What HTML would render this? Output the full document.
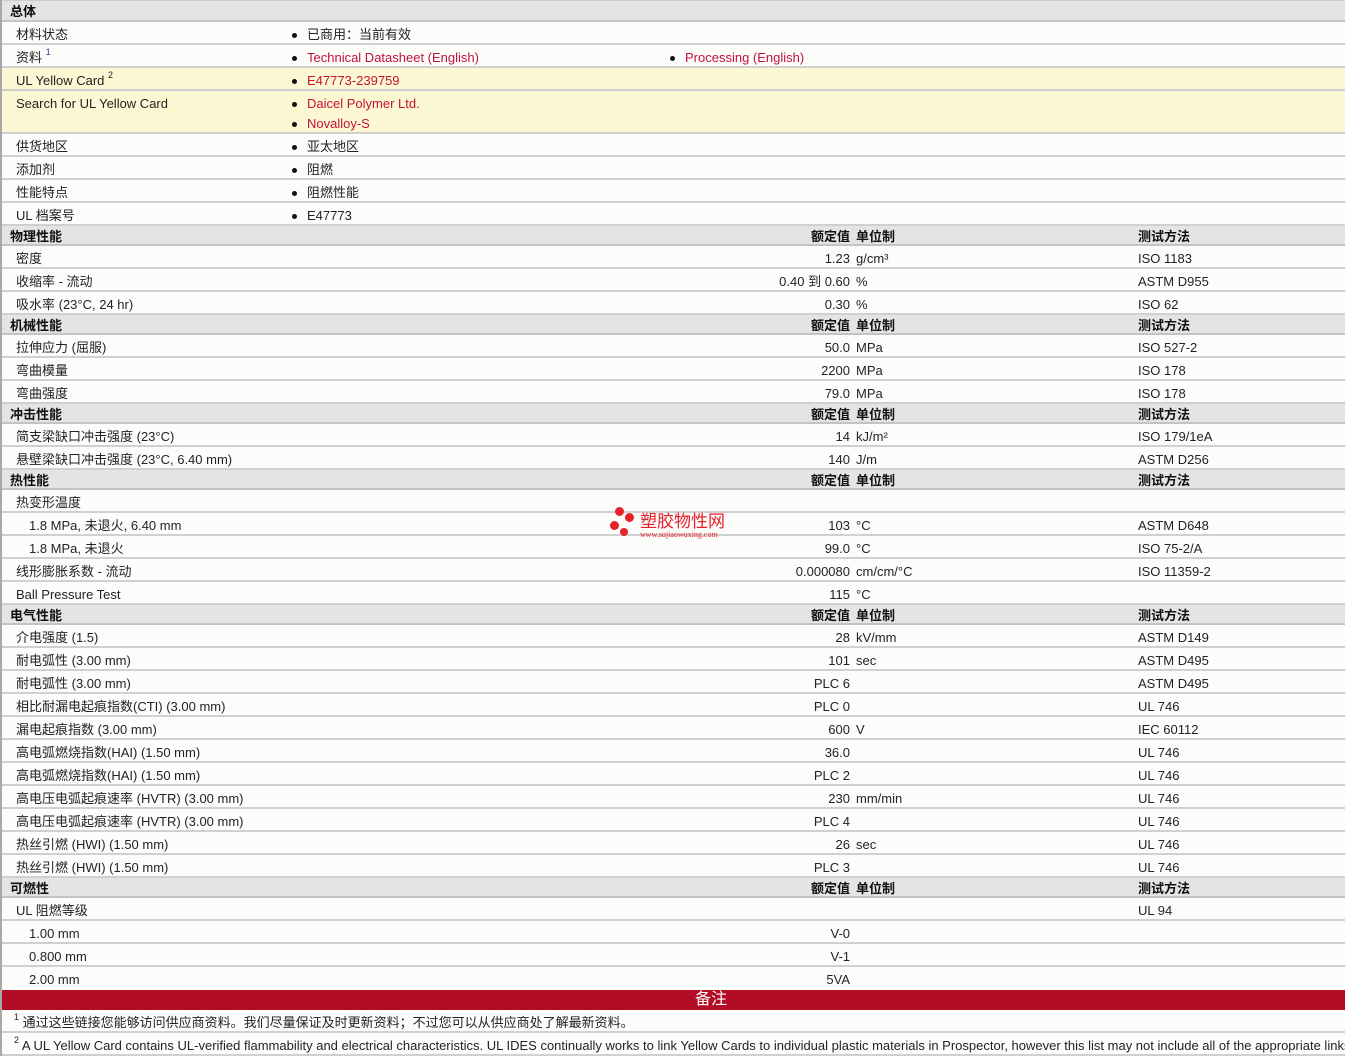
<!DOCTYPE html>
<html><head><meta charset="utf-8"><style>
*{margin:0;padding:0;box-sizing:border-box}
body{width:1345px;height:1048px;overflow:hidden;background:#fcfdfb;font-family:"Liberation Sans","Noto Sans CJK SC",sans-serif;font-size:13px;color:#222;position:relative}
#w{position:absolute;left:0;top:0;width:1345px;border-left:2px solid #a8a8a8}
.r{position:relative;height:23px;border-bottom:2px solid #d0d0d0;background:#fcfdfb}
.h{position:relative;height:20px;border-bottom:2px solid #c4c4c4;background:#e4e4e4;font-weight:bold;color:#111}
.y{background:#fdf8d4}
.r span,.h span{position:absolute;top:5px;white-space:nowrap;line-height:16px;height:16px}
.h span{top:3px}
.l{left:14px}.s{left:27px}.hl{left:8px}
.v{right:495px;text-align:right}
.u{left:854px}.m{left:1136px}
.bl::before{content:"";position:absolute;left:-15px;top:6px;width:5px;height:5px;border-radius:50%;background:#111}
.a{color:#c4103a}
sup{font-size:9px;line-height:9px;vertical-align:top;position:relative;top:-2px}
.note{height:20px;background:#b30c26;color:#fff;font-size:16px;text-align:center;line-height:20px;padding-left:75px}
</style></head><body>
<div id="w">
<div style="height:1px;background:#ccc"></div>
<div class="h" style="height:21px"><span class="hl">总体</span></div>
<div class="r"><span class="l">材料状态</span><span class="bl" style="left:305px">已商用：当前有效</span></div>
<div class="r"><span class="l">资料 <sup style="color:#551a8b">1</sup></span><span class="bl a" style="left:305px">Technical Datasheet (English)</span><span class="bl a" style="left:683px">Processing (English)</span></div>
<div class="r y"><span class="l">UL Yellow Card <sup>2</sup></span><span class="bl a" style="left:305px">E47773-239759</span></div>
<div class="r y" style="height:43px"><span class="l">Search for UL Yellow Card</span><span class="bl a" style="left:305px">Daicel Polymer Ltd.</span><span class="bl a" style="left:305px;top:25px">Novalloy-S</span></div>
<div class="r"><span class="l">供货地区</span><span class="bl" style="left:305px">亚太地区</span></div>
<div class="r"><span class="l">添加剂</span><span class="bl" style="left:305px">阻燃</span></div>
<div class="r"><span class="l">性能特点</span><span class="bl" style="left:305px">阻燃性能</span></div>
<div class="r"><span class="l">UL 档案号</span><span class="bl" style="left:305px">E47773</span></div>

<div class="h"><span class="hl">物理性能</span><span class="v">额定值</span><span class="u">单位制</span><span class="m">测试方法</span></div>
<div class="r"><span class="l">密度</span><span class="v">1.23</span><span class="u">g/cm³</span><span class="m">ISO 1183</span></div>
<div class="r"><span class="l">收缩率 - 流动</span><span class="v">0.40 到 0.60</span><span class="u">%</span><span class="m">ASTM D955</span></div>
<div class="r"><span class="l">吸水率 (23°C, 24 hr)</span><span class="v">0.30</span><span class="u">%</span><span class="m">ISO 62</span></div>

<div class="h"><span class="hl">机械性能</span><span class="v">额定值</span><span class="u">单位制</span><span class="m">测试方法</span></div>
<div class="r"><span class="l">拉伸应力 (屈服)</span><span class="v">50.0</span><span class="u">MPa</span><span class="m">ISO 527-2</span></div>
<div class="r"><span class="l">弯曲模量</span><span class="v">2200</span><span class="u">MPa</span><span class="m">ISO 178</span></div>
<div class="r"><span class="l">弯曲强度</span><span class="v">79.0</span><span class="u">MPa</span><span class="m">ISO 178</span></div>

<div class="h"><span class="hl">冲击性能</span><span class="v">额定值</span><span class="u">单位制</span><span class="m">测试方法</span></div>
<div class="r"><span class="l">简支梁缺口冲击强度 (23°C)</span><span class="v">14</span><span class="u">kJ/m²</span><span class="m">ISO 179/1eA</span></div>
<div class="r"><span class="l">悬壁梁缺口冲击强度 (23°C, 6.40 mm)</span><span class="v">140</span><span class="u">J/m</span><span class="m">ASTM D256</span></div>

<div class="h"><span class="hl">热性能</span><span class="v">额定值</span><span class="u">单位制</span><span class="m">测试方法</span></div>
<div class="r"><span class="l">热变形温度</span></div>
<div class="r"><span class="s">1.8 MPa, 未退火, 6.40 mm</span><span class="v">103</span><span class="u">°C</span><span class="m">ASTM D648</span></div>
<div class="r"><span class="s">1.8 MPa, 未退火</span><span class="v">99.0</span><span class="u">°C</span><span class="m">ISO 75-2/A</span></div>
<div class="r"><span class="l">线形膨胀系数 - 流动</span><span class="v">0.000080</span><span class="u">cm/cm/°C</span><span class="m">ISO 11359-2</span></div>
<div class="r"><span class="l">Ball Pressure Test</span><span class="v">115</span><span class="u">°C</span></div>

<div class="h"><span class="hl">电气性能</span><span class="v">额定值</span><span class="u">单位制</span><span class="m">测试方法</span></div>
<div class="r"><span class="l">介电强度 (1.5)</span><span class="v">28</span><span class="u">kV/mm</span><span class="m">ASTM D149</span></div>
<div class="r"><span class="l">耐电弧性 (3.00 mm)</span><span class="v">101</span><span class="u">sec</span><span class="m">ASTM D495</span></div>
<div class="r"><span class="l">耐电弧性 (3.00 mm)</span><span class="v">PLC 6</span><span class="m">ASTM D495</span></div>
<div class="r"><span class="l">相比耐漏电起痕指数(CTI) (3.00 mm)</span><span class="v">PLC 0</span><span class="m">UL 746</span></div>
<div class="r"><span class="l">漏电起痕指数 (3.00 mm)</span><span class="v">600</span><span class="u">V</span><span class="m">IEC 60112</span></div>
<div class="r"><span class="l">高电弧燃烧指数(HAI) (1.50 mm)</span><span class="v">36.0</span><span class="m">UL 746</span></div>
<div class="r"><span class="l">高电弧燃烧指数(HAI) (1.50 mm)</span><span class="v">PLC 2</span><span class="m">UL 746</span></div>
<div class="r"><span class="l">高电压电弧起痕速率 (HVTR) (3.00 mm)</span><span class="v">230</span><span class="u">mm/min</span><span class="m">UL 746</span></div>
<div class="r"><span class="l">高电压电弧起痕速率 (HVTR) (3.00 mm)</span><span class="v">PLC 4</span><span class="m">UL 746</span></div>
<div class="r"><span class="l">热丝引燃 (HWI) (1.50 mm)</span><span class="v">26</span><span class="u">sec</span><span class="m">UL 746</span></div>
<div class="r"><span class="l">热丝引燃 (HWI) (1.50 mm)</span><span class="v">PLC 3</span><span class="m">UL 746</span></div>

<div class="h"><span class="hl">可燃性</span><span class="v">额定值</span><span class="u">单位制</span><span class="m">测试方法</span></div>
<div class="r"><span class="l">UL 阻燃等级</span><span class="m">UL 94</span></div>
<div class="r"><span class="s">1.00 mm</span><span class="v">V-0</span></div>
<div class="r"><span class="s">0.800 mm</span><span class="v">V-1</span></div>
<div class="r" style="border-bottom:none"><span class="s">2.00 mm</span><span class="v">5VA</span></div>
<div class="note">备注</div>
<div class="r"><span class="l" style="left:12px;top:5px"><sup>1</sup> 通过这些链接您能够访问供应商资料。我们尽量保证及时更新资料；不过您可以从供应商处了解最新资料。</span></div>
<div class="r"><span class="l" style="left:12px;top:5px"><sup>2</sup> A UL Yellow Card contains UL-verified flammability and electrical characteristics. UL IDES continually works to link Yellow Cards to individual plastic materials in Prospector, however this list may not include all of the appropriate links.</span></div>
</div>
<div style="position:absolute;left:610px;top:507px;width:30px;height:32px">
<div style="position:absolute;left:5px;top:0;width:9px;height:9px;border-radius:50%;background:#e8202a"></div>
<div style="position:absolute;left:15px;top:6px;width:9px;height:9px;border-radius:50%;background:#e8202a"></div>
<div style="position:absolute;left:0;top:14px;width:9px;height:9px;border-radius:50%;background:#e8202a"></div>
<div style="position:absolute;left:10px;top:21px;width:8px;height:8px;border-radius:50%;background:#e8202a"></div>
</div>
<div style="position:absolute;left:640px;top:510px;font-size:17px;color:#e8202a;font-family:'Noto Sans CJK SC',sans-serif;line-height:20px">塑胶物性网</div>
<div style="position:absolute;left:640px;top:530px;font-size:8px;color:#e8202a;font-family:'Liberation Serif',serif">www.sujiaowuxing.com</div>
</body></html>
